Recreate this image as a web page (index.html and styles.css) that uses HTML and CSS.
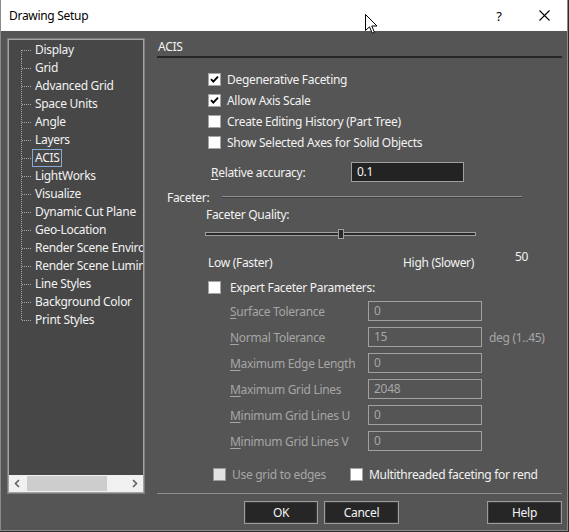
FILE: index.html
```html
<!DOCTYPE html>
<html>
<head>
<meta charset="utf-8">
<title>Drawing Setup</title>
<link rel="stylesheet" href="styles.css">
</head>
<body>
<div class="window">
  <div class="titlebar">
    <span class="title">Drawing Setup</span>
    <span class="help">?</span>
    <span class="close">
      <svg width="11" height="11" viewBox="0 0 11 11"><path d="M0.5 0.5 L10.5 10.5 M10.5 0.5 L0.5 10.5" stroke="#000" stroke-width="1.1" fill="none"/></svg>
    </span>
    <svg class="cursor" width="13" height="20" viewBox="0 0 13 20"><path d="M0.5 0.5 L0.5 16.5 L4.5 12.8 L7.2 19.2 L9.4 18.3 L6.8 12 L12 12 Z" fill="#fff" stroke="#000" stroke-width="1" stroke-linejoin="miter"/></svg>
  </div>
  <div class="main">
    <div class="tree">
      <ul class="tree-list">
        <li class="item first"><span class="twig"></span><span class="lbl">Display</span></li>
        <li class="item"><span class="twig"></span><span class="lbl">Grid</span></li>
        <li class="item"><span class="twig"></span><span class="lbl">Advanced Grid</span></li>
        <li class="item"><span class="twig"></span><span class="lbl">Space Units</span></li>
        <li class="item"><span class="twig"></span><span class="lbl">Angle</span></li>
        <li class="item"><span class="twig"></span><span class="lbl">Layers</span></li>
        <li class="item"><span class="twig"></span><span class="lbl selected">ACIS</span></li>
        <li class="item"><span class="twig"></span><span class="lbl">LightWorks</span></li>
        <li class="item"><span class="twig"></span><span class="lbl">Visualize</span></li>
        <li class="item"><span class="twig"></span><span class="lbl">Dynamic Cut Plane</span></li>
        <li class="item"><span class="twig"></span><span class="lbl">Geo-Location</span></li>
        <li class="item"><span class="twig"></span><span class="lbl">Render Scene Environment</span></li>
        <li class="item"><span class="twig"></span><span class="lbl">Render Scene Luminance</span></li>
        <li class="item"><span class="twig"></span><span class="lbl">Line Styles</span></li>
        <li class="item"><span class="twig"></span><span class="lbl">Background Color</span></li>
        <li class="item last"><span class="twig"></span><span class="lbl">Print Styles</span></li>
      </ul>
      <div class="hscroll">
        <span class="arrow"><svg width="9" height="9" viewBox="0 0 9 9"><path d="M6 1 L2.5 4.5 L6 8" stroke="#606060" stroke-width="1.6" fill="none"/></svg></span>
        <span class="thumb-area"><span class="sthumb"></span></span>
        <span class="arrow"><svg width="9" height="9" viewBox="0 0 9 9"><path d="M3 1 L6.5 4.5 L3 8" stroke="#606060" stroke-width="1.6" fill="none"/></svg></span>
      </div>
    </div>

    <div class="page">
      <div class="page-title">ACIS</div>
      <div class="page-rule"></div>

      <div class="checks">
        <div class="check"><span class="box"><svg width="11" height="11" viewBox="0 0 11 11"><path d="M2 5.2 L4.3 7.6 L9 2.6" stroke="#000" stroke-width="1.9" fill="none"/></svg></span><span>Degenerative Faceting</span></div>
        <div class="check"><span class="box"><svg width="11" height="11" viewBox="0 0 11 11"><path d="M2 5.2 L4.3 7.6 L9 2.6" stroke="#000" stroke-width="1.9" fill="none"/></svg></span><span>Allow Axis Scale</span></div>
        <div class="check"><span class="box"></span><span>Create Editing History (Part Tree)</span></div>
        <div class="check"><span class="box"></span><span>Show Selected Axes for Solid Objects</span></div>
      </div>

      <div class="acc-row">
        <span class="acc-label"><u>R</u>elative accuracy:</span>
        <span class="field dark">0.1</span>
      </div>

      <div class="group-row">
        <span class="group-label">Faceter:</span>
        <span class="group-line"></span>
      </div>

      <div class="fq-label">Faceter Quality:</div>

      <div class="slider">
        <div class="track"><span class="sl-thumb"></span></div>
      </div>

      <div class="range-row">
        <span class="low">Low (Faster)</span>
        <span class="high">High (Slower)</span>
        <span class="value">50</span>
      </div>

      <div class="expert-row">
        <span class="box"></span>
        <span>Expert Faceter Parameters:</span>
      </div>

      <div class="form">
        <div class="frow"><span class="flabel"><u>S</u>urface Tolerance</span><span class="field">0</span></div>
        <div class="frow"><span class="flabel"><u>N</u>ormal Tolerance</span><span class="field">15</span><span class="unit">deg (1..45)</span></div>
        <div class="frow"><span class="flabel"><u>M</u>aximum Edge Length</span><span class="field">0</span></div>
        <div class="frow"><span class="flabel"><u>M</u>aximum Grid Lines</span><span class="field">2048</span></div>
        <div class="frow"><span class="flabel"><u>M</u>inimum Grid Lines U</span><span class="field">0</span></div>
        <div class="frow"><span class="flabel"><u>M</u>inimum Grid Lines V</span><span class="field">0</span></div>
      </div>

      <div class="bottom-checks">
        <div class="bcheck disabled"><span class="box dis"></span><span>Use grid to edges</span></div>
        <div class="bcheck multi"><span class="box"></span><span>Multithreaded faceting for rend</span></div>
      </div>

      <div class="page-sep"></div>
    </div>

    <div class="buttons">
      <span class="btn ok">OK</span>
      <span class="btn cancel">Cancel</span>
      <span class="btn helpbtn">Help</span>
    </div>
  </div>
</div>
</body>
</html>
```

FILE: styles.css
```css
* { box-sizing: border-box; }

html, body {
  margin: 0;
  padding: 0;
  background: #2b2b2b;
}

body {
  font-family: "Noto Sans", "Liberation Sans", sans-serif;
  font-size: 12px;
  letter-spacing: -0.3px;
  color: #f2f2f2;
}

.window {
  width: 568px;
  height: 531px;
  background: #555555;
  border: 1px solid #8a8a8a;
  border-top: none;
  display: flex;
  flex-direction: column;
}

/* ---------- title bar ---------- */
.titlebar {
  position: relative;
  height: 31px;
  background: #ffffff;
  display: flex;
  align-items: center;
  color: #000;
  flex: none;
}

.title {
  padding-left: 8px;
  font-size: 12px;
  flex: 1;
}

.help {
  width: 20px;
  text-align: center;
  font-size: 13px;
  margin-right: 30px;
}

.close {
  width: 11px;
  height: 11px;
  display: flex;
  margin-right: 17px;
  margin-top: -1px;
}

.cursor {
  position: absolute;
  left: 364px;
  top: 14px;
}

/* ---------- main area ---------- */
.main {
  flex: 1;
  display: grid;
  grid-template-columns: 138px 405px;
  grid-template-rows: 456px 23px;
  column-gap: 12px;
  row-gap: 7px;
  padding: 7px 0 0 6px;
}

/* ---------- tree ---------- */
.tree {
  background: #474747;
  border: 1px solid #7c7c7c;
  box-shadow: inset 0 0 0 1px #a3a3a3;
  padding: 1px;
  display: flex;
  flex-direction: column;
  overflow: hidden;
}

.tree-list {
  list-style: none;
  margin: 0;
  padding: 1px 0 0 0;
  flex: 1;
  overflow: hidden;
}

.item {
  height: 18px;
  display: flex;
  align-items: center;
  white-space: nowrap;
}

.twig {
  flex: none;
  width: 10px;
  height: 18px;
  margin-left: 12px;
  margin-right: 1px;
  background-image:
    repeating-linear-gradient(to bottom, #a8a8a8 0 1px, transparent 1px 2px),
    repeating-linear-gradient(to right, #a8a8a8 0 1px, transparent 1px 2px);
  background-size: 1px 18px, 9px 1px;
  background-position: 0 0, 1px 9px;
  background-repeat: no-repeat;
}

.first .twig {
  background-size: 1px 9px, 9px 1px;
  background-position: 0 9px, 1px 9px;
}

.last .twig {
  background-size: 1px 10px, 9px 1px;
  background-position: 0 0, 1px 9px;
}

.lbl {
  padding: 0 2px;
  border: 1px solid transparent;
  line-height: 16px;
  color: #f2f2f2;
}

.lbl.selected {
  border-color: #86aad6;
}

.hscroll {
  flex: none;
  height: 17px;
  background: #f0f0f0;
  display: flex;
  align-items: center;
}

.arrow {
  width: 17px;
  height: 17px;
  display: flex;
  align-items: center;
  justify-content: center;
  flex: none;
}

.thumb-area {
  flex: 1;
  height: 17px;
  display: flex;
  align-items: center;
}

.sthumb {
  width: 80px;
  height: 15px;
  margin-left: 1px;
  background: #cdcdcd;
}

/* ---------- page ---------- */
.page {
  display: flex;
  flex-direction: column;
}

.page-title {
  height: 17px;
  line-height: 17px;
  padding-left: 1px;
  color: #f4f4f4;
}

.page-rule {
  margin-top: 1px;
  height: 2px;
  background: #262626;
}

.checks {
  margin-top: 11px;
  display: flex;
  flex-direction: column;
  padding-left: 51px;
}

.check {
  height: 21px;
  display: flex;
  align-items: center;
  gap: 6px;
}

.box {
  width: 13px;
  height: 13px;
  flex: none;
  background: #ffffff;
  border: 1px solid #a3a3a3;
  display: flex;
  align-items: center;
  justify-content: center;
}

.box.dis {
  background: #e3e3e3;
  border-color: #9a9a9a;
}

.acc-row {
  margin-top: 9px;
  height: 20px;
  display: flex;
  align-items: center;
  padding-left: 54px;
}

.acc-label {
  width: 140px;
}

.field {
  width: 114px;
  height: 20px;
  border: 1px solid #a0a0a0;
  color: #a6a6a6;
  padding-left: 5px;
  line-height: 17px;
  flex: none;
}

.field.dark {
  width: 113px;
  background: #232323;
  color: #f4f4f4;
}

.group-row {
  margin-top: 9px;
  height: 14px;
  display: flex;
  align-items: center;
  padding-left: 10px;
}

.group-label {
  line-height: 14px;
}

.group-line {
  margin-left: 13px;
  width: 300px;
  height: 2px;
  border-top: 1px solid #8d8d8d;
  border-bottom: 1px solid #404040;
  margin-top: -2px;
}

.fq-label {
  margin-top: 3px;
  height: 14px;
  line-height: 14px;
  padding-left: 49px;
}

.slider {
  margin-top: 7px;
  height: 10px;
  padding-left: 48px;
  display: flex;
  align-items: center;
}

.track {
  position: relative;
  width: 271px;
  height: 4px;
  border: 1px solid #a0a0a0;
  background: #2a2a2a;
}

.sl-thumb {
  position: absolute;
  left: 132px;
  top: -4px;
  width: 6px;
  height: 10px;
  border: 1px solid #a0a0a0;
  background: #2a2a2a;
}

.range-row {
  margin-top: 9px;
  height: 24px;
  display: flex;
  position: relative;
}

.low, .high {
  line-height: 14px;
  margin-top: 8px;
}

.low {
  margin-left: 51px;
  width: 195px;
}

.high {
  width: 112px;
}

.value {
  line-height: 14px;
  margin-top: 2px;
}

.expert-row {
  margin-top: 7px;
  height: 16px;
  display: flex;
  align-items: center;
  padding-left: 51px;
  gap: 9px;
}

.form {
  margin-top: 6px;
  display: flex;
  flex-direction: column;
  gap: 6px;
  padding-left: 73px;
}

.frow {
  height: 20px;
  display: flex;
  align-items: center;
}

.flabel {
  width: 138px;
  color: #a6a6a6;
}

.flabel u {
  text-decoration-thickness: 1px;
  text-underline-offset: 2px;
}

.acc-label u {
  text-underline-offset: 2px;
}

.unit {
  margin-left: 7px;
  color: #a6a6a6;
}

.bottom-checks {
  margin-top: 15px;
  height: 16px;
  display: flex;
  align-items: center;
  padding-left: 56px;
}

.bcheck {
  display: flex;
  align-items: center;
  gap: 6px;
}

.bcheck.disabled {
  color: #a6a6a6;
  width: 137px;
}

.page-sep {
  margin-top: 11px;
  height: 1px;
  background: #8d8d8d;
}

/* ---------- buttons ---------- */
.buttons {
  grid-column: 2;
  display: flex;
  padding-left: 87px;
}

.btn {
  height: 23px;
  border: 1px solid #9c9c9c;
  box-shadow: inset 0 0 0 1px #3a3a3a;
  background: #262626;
  color: #f4f4f4;
  display: flex;
  align-items: center;
  justify-content: center;
}

.ok { width: 74px; }
.cancel { width: 75px; margin-left: 6px; }
.helpbtn { width: 75px; margin-left: auto; }
```
